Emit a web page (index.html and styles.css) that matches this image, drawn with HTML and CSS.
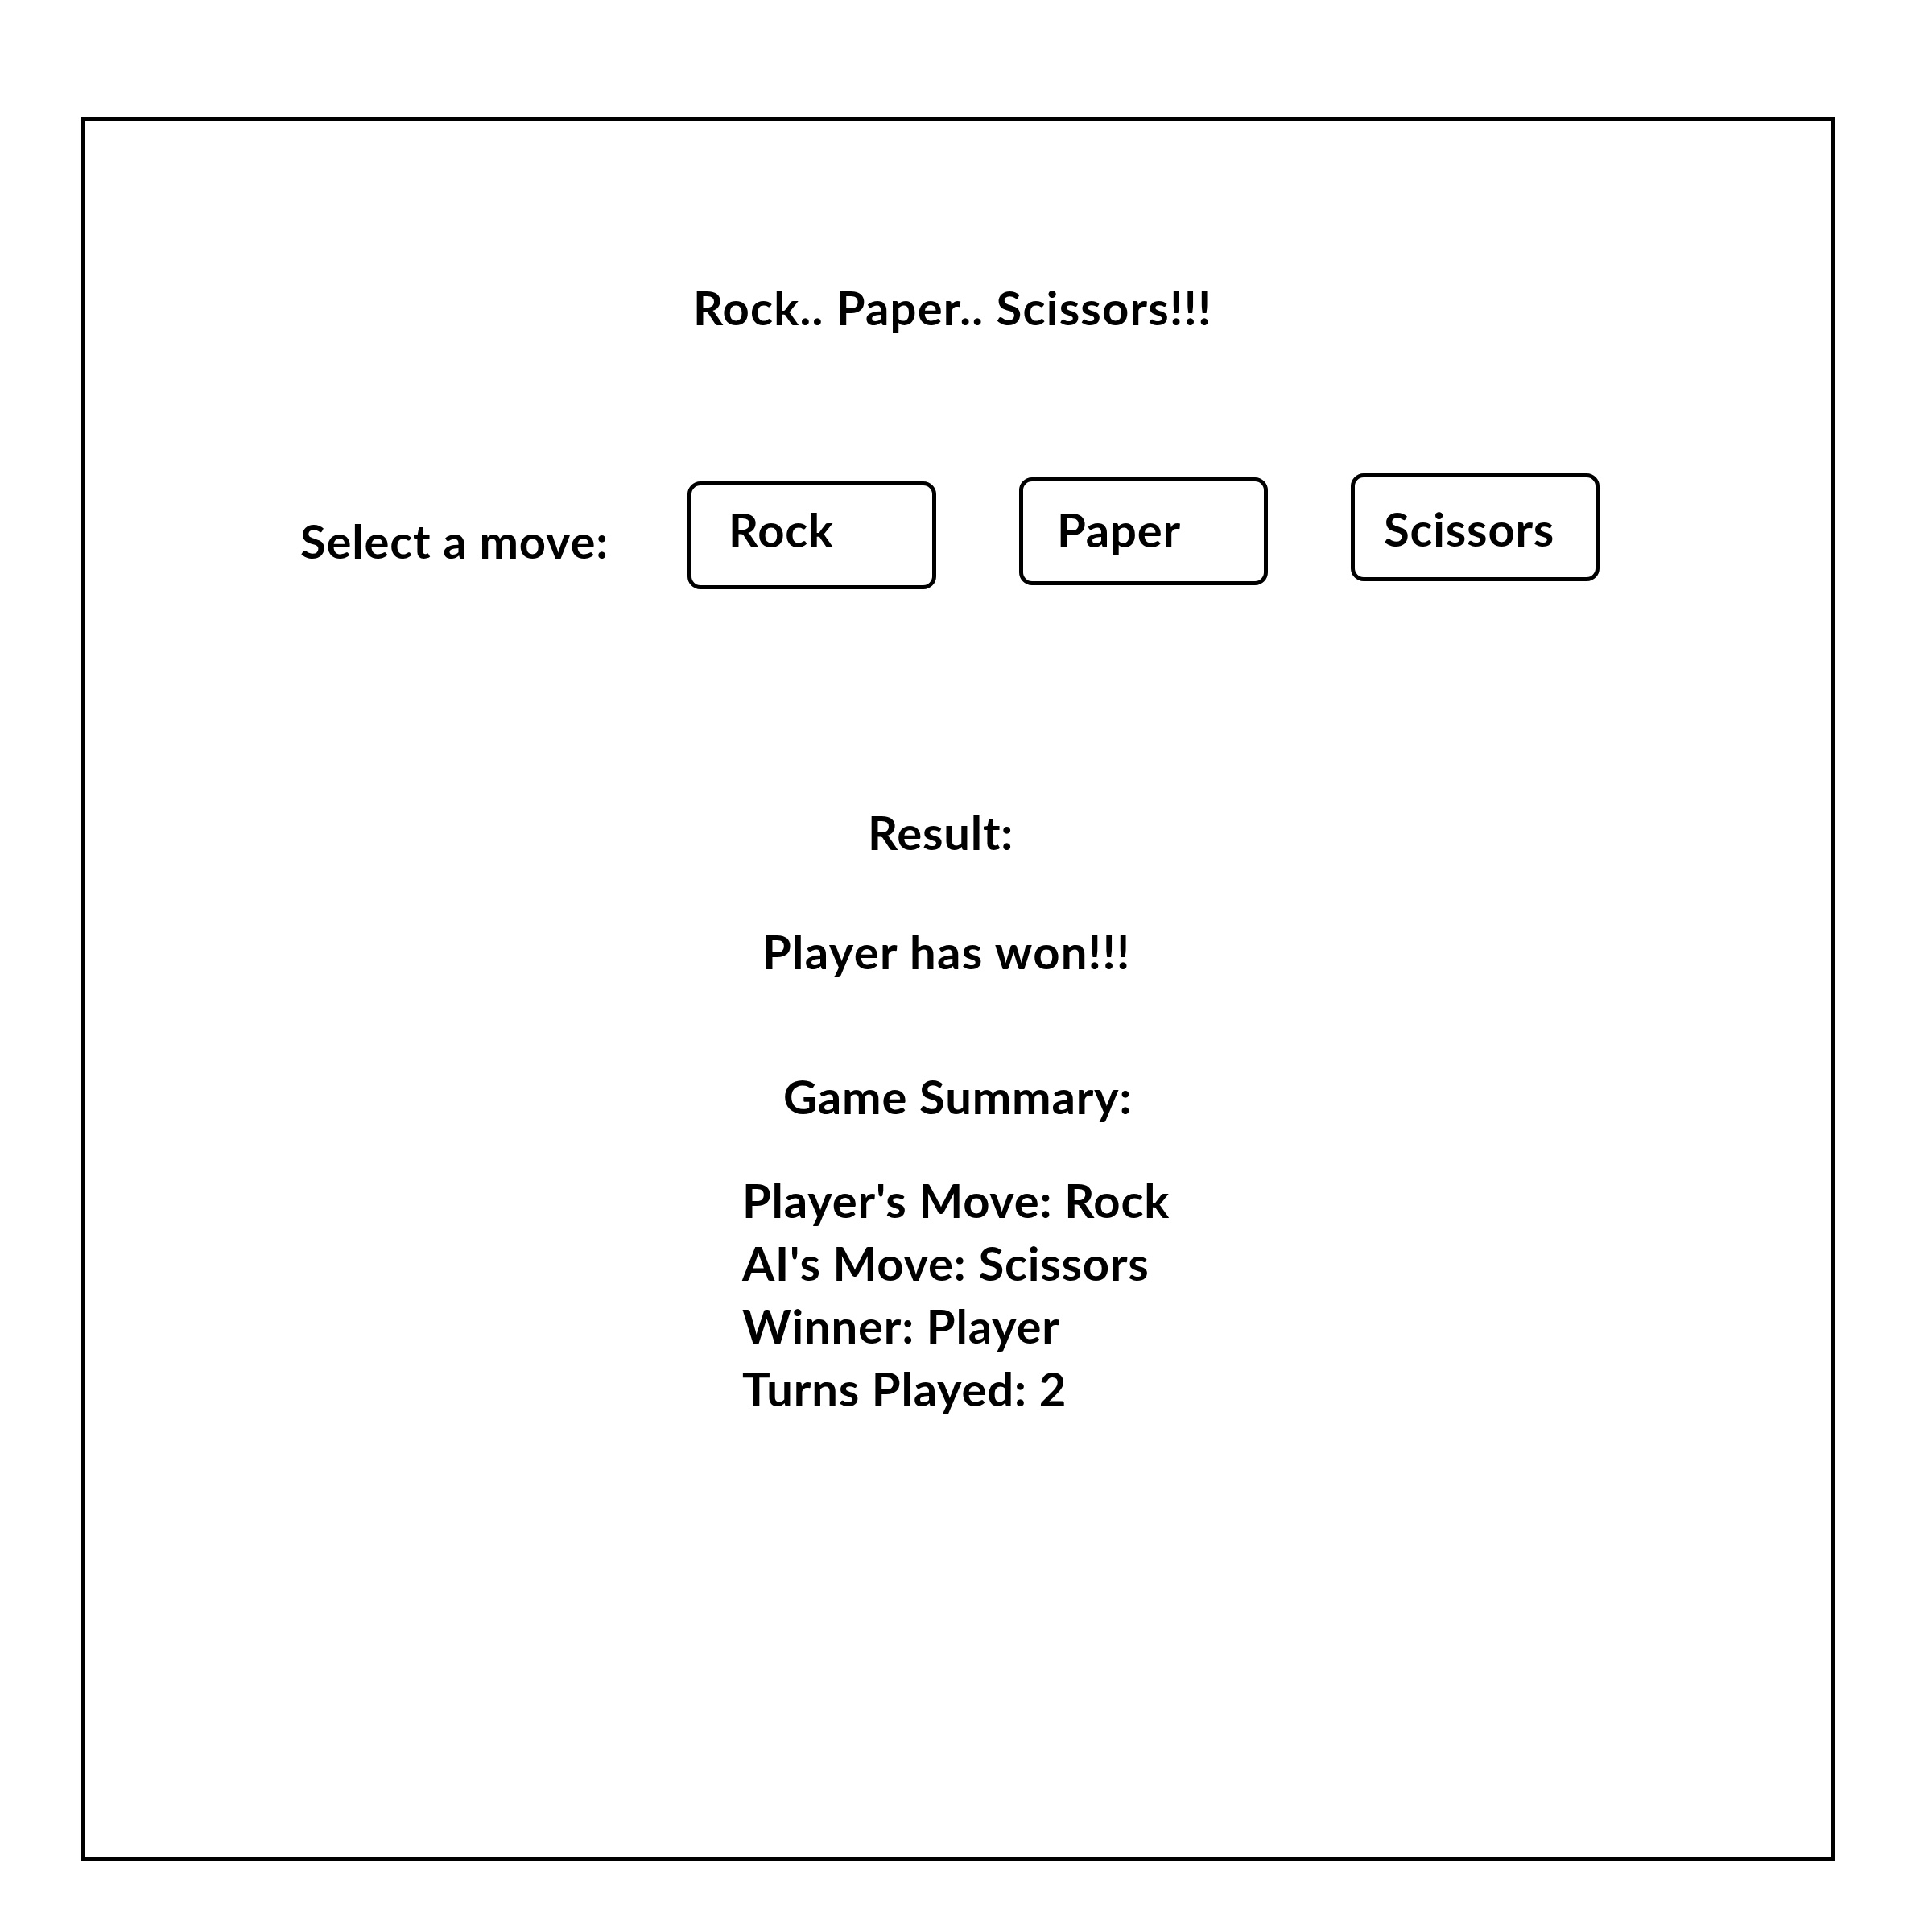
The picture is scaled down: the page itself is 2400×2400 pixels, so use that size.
FILE: index.html
```html
<!DOCTYPE html>
<html lang="en">
<head>
<meta charset="utf-8">
<title>Rock Paper Scissors</title>
<link rel="stylesheet" href="styles.css">
</head>
<body>
<main class="frame">
  <h1 class="title">Rock.. Paper.. Scissors!!!</h1>
  <section class="moves">
    <span class="moves-label">Select a move:</span>
    <button class="move move-rock">Rock</button>
    <button class="move move-paper">Paper</button>
    <button class="move move-scissors">Scissors</button>
  </section>
  <p class="result-label">Result:</p>
  <p class="result-text">Player has won!!!</p>
  <h2 class="summary-title">Game Summary:</h2>
  <ul class="summary">
    <li>Player's Move: Rock</li>
    <li>AI's Move: Scissors</li>
    <li>Winner: Player</li>
    <li>Turns Played: 2</li>
  </ul>
</main>
</body>
</html>
```
FILE: styles.css
```css
html, body {
  margin: 0;
  padding: 0;
  background: #ffffff;
}

body {
  font-family: "Lato", "Noto Sans", sans-serif;
  font-weight: 700;
  font-size: 58px;
  letter-spacing: 0.8px;
  line-height: 78px;
  color: #000000;
}

.frame {
  box-sizing: border-box;
  width: 2179px;
  height: 2167px;
  margin: 145px 0 0 101px;
  border: 5px solid #000000;
  display: flex;
  flex-direction: column;
  align-items: flex-start;
}

.title,
.summary-title,
.result-label,
.result-text {
  font: inherit;
  margin: 0;
}

.title {
  margin-top: 193px;
  margin-left: 755px;
  letter-spacing: 1.2px;
}

.moves {
  display: flex;
  align-items: flex-start;
  margin-top: 167px;
  margin-left: 267px;
}

.moves-label {
  flex: none;
  width: 481px;
  margin-top: 45px;
}

.move {
  flex: none;
  box-sizing: border-box;
  width: 309px;
  height: auto;
  border: 5px solid #000000;
  border-radius: 16px;
  background: #ffffff;
  font: inherit;
  line-height: 78px;
  letter-spacing: inherit;
  color: inherit;
  text-align: left;
  display: block;
  padding: 0;
  cursor: pointer;
}

.move + .move {
  margin-left: 103px;
}

.move-rock {
  margin-top: 10px;
  padding: 16px 0 30px 46px;
}

.move-paper {
  margin-top: 5px;
  padding: 21px 0 25px 42px;
}

.move-scissors {
  margin-top: 0;
  padding: 25px 0 21px 36px;
}

.result-label {
  margin-top: 263px;
  margin-left: 972px;
}

.result-text {
  margin-top: 70px;
  margin-left: 841px;
  letter-spacing: 1.3px;
}

.summary-title {
  margin-top: 102px;
  margin-left: 867px;
}

.summary {
  list-style: none;
  margin: 51px 0 0 816px;
  padding: 0;
}
```
